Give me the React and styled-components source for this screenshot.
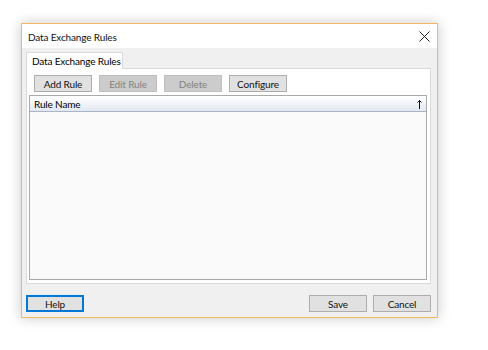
import React from 'react'
import styled, { createGlobalStyle } from 'styled-components'

const Global = createGlobalStyle`
  html, body {
    margin: 0;
    padding: 0;
    background: #ffffff;
  }
  body {
    font-family: Lato, "Noto Sans", sans-serif;
    font-size: 10px;
    letter-spacing: -0.15px;
    color: #000;
  }
`

const Page = styled.div`
  padding: 23px 0 0 21px;
  width: 488px;
  height: 350px;
  box-sizing: border-box;
`

const Window = styled.div`
  width: 417px;
  height: 295px;
  box-sizing: border-box;
  border: 1px solid #f3b760;
  background: #f0f0f0;
  box-shadow: 0 0 12px rgba(0, 0, 0, 0.22);
  display: flex;
  flex-direction: column;
`

const TitleBar = styled.div`
  height: 24px;
  background: #ffffff;
  display: flex;
  align-items: center;
  justify-content: space-between;
  padding: 0 7px 0 6px;
  flex-shrink: 0;
`

const Title = styled.span`
  font-size: 10px;
  color: #111;
  padding-top: 1px;
  white-space: nowrap;
`

const Close = styled.div`
  width: 12px;
  height: 12px;
  display: flex;
  align-items: center;
  justify-content: center;
  margin-top: 1px;
`

const Body = styled.div`
  flex: 1;
  display: flex;
  flex-direction: column;
  padding: 4px 6px 0 4px;
`

const TabStrip = styled.div`
  display: flex;
  height: 16px;
`

const Tab = styled.div`
  width: 97px;
  height: 17px;
  box-sizing: border-box;
  border: 1px solid #d9d9d9;
  border-bottom: none;
  background: #ffffff;
  font-size: 10px;
  padding-left: 5px;
  line-height: 16px;
  white-space: nowrap;
  position: relative;
  z-index: 1;
`

const Panel = styled.div`
  height: 216px;
  box-sizing: border-box;
  border: 1px solid #d9d9d9;
  background: #ffffff;
  padding: 6px 3px 3px 2px;
  display: flex;
  flex-direction: column;
`

const Toolbar = styled.div`
  display: flex;
  gap: 7px;
  padding-left: 5px;
  margin-bottom: 3px;
`

const Button = styled.div`
  width: 58px;
  height: 17px;
  box-sizing: border-box;
  border: 1px solid ${p => (p.$disabled ? '#bfbfbf' : '#adadad')};
  background: ${p => (p.$disabled ? '#cccccc' : '#e1e1e1')};
  color: ${p => (p.$disabled ? '#838383' : '#111')};
  font-size: 10px;
  display: flex;
  align-items: center;
  justify-content: center;
  padding-top: 1px;
  line-height: 1;
  white-space: nowrap;
  ${p => p.$focused && `
    border: 2px solid #0078d7;
  `}
`

const Grid = styled.div`
  flex: 1;
  border: 1px solid #a9a9a9;
  background: #fafafa;
  display: flex;
  flex-direction: column;
`

const Header = styled.div`
  height: 16px;
  box-sizing: border-box;
  background: linear-gradient(to bottom, #ffffff 0%, #f1f4f9 50%, #e2e8f2 100%);
  border-bottom: 1px solid #aab4c4;
  display: flex;
  align-items: center;
  justify-content: space-between;
  padding: 1px 4px 0 4px;
  font-size: 10px;
`

const Footer = styled.div`
  display: flex;
  justify-content: space-between;
  align-items: center;
  padding: 11px 0 0 0;
`

const Right = styled.div`
  display: flex;
  gap: 6px;
`

export default function App() {
  return (
    <>
      <Global />
      <Page>
        <Window>
          <TitleBar>
            <Title>Data Exchange Rules</Title>
            <Close>
              <svg width="11" height="11" viewBox="0 0 11 11">
                <path d="M0.5 0.5 L10.5 10.5 M10.5 0.5 L0.5 10.5" stroke="#222" strokeWidth="1" />
              </svg>
            </Close>
          </TitleBar>
          <Body>
            <TabStrip>
              <Tab>Data Exchange Rules</Tab>
            </TabStrip>
            <Panel>
              <Toolbar>
                <Button>Add Rule</Button>
                <Button $disabled>Edit Rule</Button>
                <Button $disabled>Delete</Button>
                <Button>Configure</Button>
              </Toolbar>
              <Grid>
                <Header>
                  <span>Rule Name</span>
                  <svg width="5" height="9" viewBox="0 0 5 9">
                    <path d="M2.5 0.5 L2.5 9 M0.5 2.5 L2.5 0.5 L4.5 2.5" stroke="#111" strokeWidth="1" fill="none" />
                  </svg>
                </Header>
              </Grid>
            </Panel>
            <Footer>
              <Button $focused>Help</Button>
              <Right>
                <Button>Save</Button>
                <Button>Cancel</Button>
              </Right>
            </Footer>
          </Body>
        </Window>
      </Page>
    </>
  )
}
